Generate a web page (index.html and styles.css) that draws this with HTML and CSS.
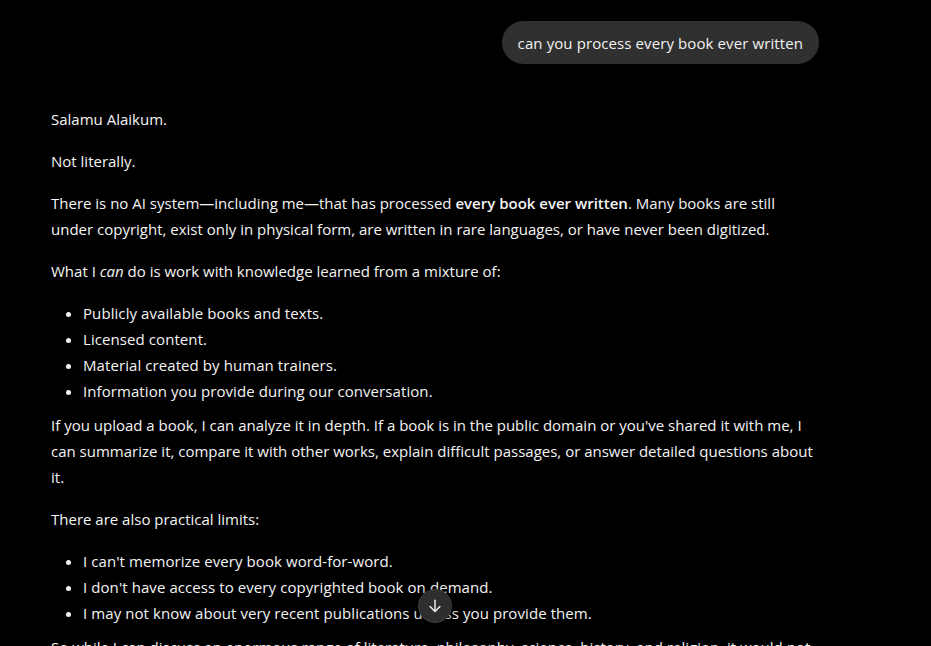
FILE: index.html
```html
<!DOCTYPE html>
<html lang="en">
<head>
<meta charset="utf-8">
<title>Chat</title>
<link rel="stylesheet" href="styles.css">
</head>
<body>
<main class="thread">
  <div class="user-row">
    <div class="user-bubble">can you process every book ever written</div>
  </div>

  <article class="reply">
    <p>Salamu Alaikum.</p>
    <p>Not literally.</p>
    <p>There is no AI system—including me—that has processed <strong>every book ever written</strong>. Many books are still under copyright, exist only in physical form, are written in rare languages, or have never been digitized.</p>
    <p>What I <em>can</em> do is work with knowledge learned from a mixture of:</p>
    <ul>
      <li>Publicly available books and texts.</li>
      <li>Licensed content.</li>
      <li>Material created by human trainers.</li>
      <li>Information you provide during our conversation.</li>
    </ul>
    <p>If you upload a book, I can analyze it in depth. If a book is in the public domain or you've shared it with me, I can summarize it, compare it with other works, explain difficult passages, or answer detailed questions about it.</p>
    <p>There are also practical limits:</p>
    <ul>
      <li>I can't memorize every book word-for-word.</li>
      <li>I don't have access to every copyrighted book on demand.</li>
      <li>I may not know about very recent publications unless you provide them.</li>
    </ul>
    <p>So while I can discuss an enormous range of literature, philosophy, science, history, and religion, it would not be accurate to say I have read every book ever written.</p>
  </article>
</main>

<button class="scroll-down" type="button" aria-label="Scroll to bottom">
  <svg width="18" height="18" viewBox="0 0 20 20" fill="none" stroke="currentColor" stroke-width="1.6" stroke-linecap="round" stroke-linejoin="round">
    <path d="M10 3.5v12.5"/>
    <path d="M4.5 10.5L10 16l5.5-5.5"/>
  </svg>
</button>
</body>
</html>
```
FILE: styles.css
```css
html, body {
  margin: 0;
  height: 100%;
  background: #000;
  overflow: hidden;
}

body {
  color: #f4f4f4;
  font-family: "Open Sans", "Noto Sans", sans-serif;
  font-size: 15px;
  line-height: 26px;
}

.thread {
  width: 768px;
  margin-left: 51px;
  padding-top: 21px;
}

.user-row {
  display: flex;
  justify-content: flex-end;
}

.user-bubble {
  background: #303030;
  color: #f2f2f2;
  border-radius: 22px;
  padding: 9px 16px 8px;
  line-height: 26px;
  letter-spacing: 0.1px;
}

.reply {
  padding-top: 42px;
}

.reply p {
  margin: 0 0 16px;
}

.reply ul {
  margin: 0 0 8px;
  padding-left: 32px;
}

.reply li {
  letter-spacing: 0.08px;
}

.reply strong {
  font-weight: 600;
}

.reply em {
  font-style: italic;
}

.scroll-down {
  position: fixed;
  left: 418px;
  top: 589px;
  width: 34px;
  height: 34px;
  padding: 0;
  border: 1px solid #3c3c3c;
  border-radius: 50%;
  background: #2e2e2e;
  color: #f0f0f0;
  display: flex;
  align-items: center;
  justify-content: center;
  box-shadow: 0 2px 6px rgba(0, 0, 0, 0.5);
}
```
